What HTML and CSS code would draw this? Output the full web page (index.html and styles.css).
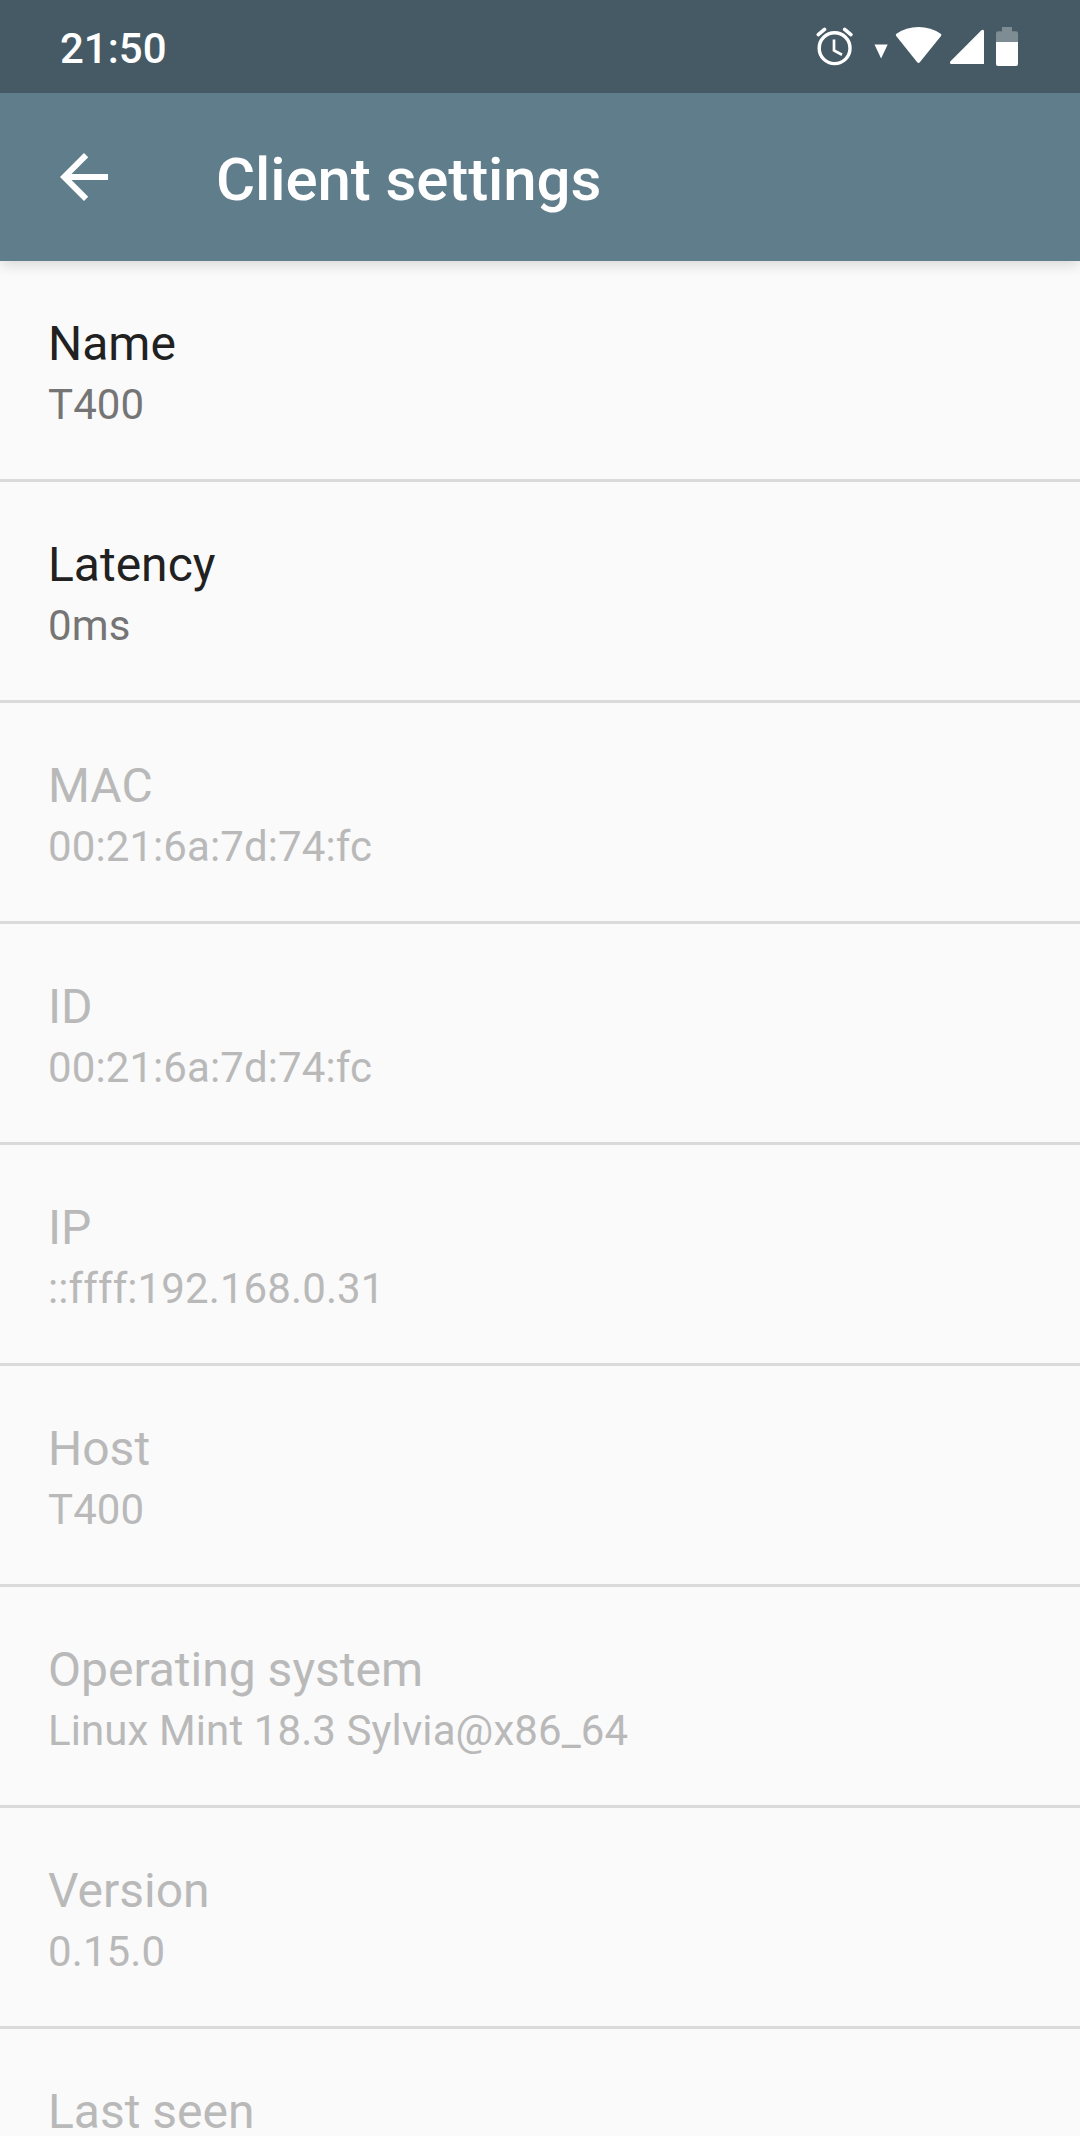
FILE: index.html
```html
<!DOCTYPE html>
<html lang="en">
<head>
<meta charset="utf-8">
<title>Client settings</title>
<link rel="stylesheet" href="styles.css">
</head>
<body>
<div class="screen">
  <div class="status-bar">
    <span class="clock">21:50</span>
    <div class="status-icons">
      <svg class="alarm" width="38" height="40" viewBox="816 27 38 40">
        <circle cx="834.6" cy="48.2" r="15.4" fill="none" stroke="#fff" stroke-width="3.4"/>
        <path d="M834 39.5v11l8 4.2" fill="none" stroke="#fff" stroke-width="2.7"/>
        <path d="M818.3 34.6l6.2-5.2M844.7 29.4l6.2 5.2" fill="none" stroke="#fff" stroke-width="3.6" stroke-linecap="round"/>
      </svg>
      <svg class="triangle" width="14" height="40" viewBox="874.5 27 14 40">
        <path d="M875 44.5h13.2L881.6 58.5z" fill="#fff"/>
      </svg>
      <svg class="wifi" width="47" height="40" viewBox="895 27 47 40">
        <path d="M896.5 33.8Q906 27 918.5 27T940.7 33.8Q942 34.8 941 36.1L920 62Q918.5 63.8 917 62L896.2 36.1Q895.2 34.8 896.5 33.8z" fill="#fff"/>
      </svg>
      <svg class="signal" width="34" height="40" viewBox="950 27 34 40">
        <path d="M950.5 61.2L981.2 30.5Q982 29.8 983 29.8Q984 30 984 31.2V64H951.3Q950 64 950 62.5Q950 61.7 950.5 61.2z" fill="#fff"/>
      </svg>
      <svg class="battery" width="22" height="40" viewBox="996 27 22 40">
        <path d="M1002 27h10v4.200h4q2 0 2 2V42h-22v-8.800q0-2 2-2h4z" fill="#7e8c93"/>
        <path d="M996 42h22v22q0 2-2 2h-18q-2 0-2-2z" fill="#fff"/>
      </svg>
    </div>
  </div>
  <header class="app-bar">
    <svg class="back" width="72" height="72" viewBox="0 0 24 24"><path fill="#fff" d="M20 11H7.830l5.590-5.590L12 4l-8 8 8 8 1.410-1.410L7.830 13H20v-2z"/></svg>
    <h1 class="title">Client settings</h1>
  </header>
  <main class="list">
    <div class="item"><div class="name">Name</div><div class="value">T400</div></div>
    <div class="item"><div class="name">Latency</div><div class="value">0ms</div></div>
    <div class="item disabled"><div class="name">MAC</div><div class="value">00:21:6a:7d:74:fc</div></div>
    <div class="item disabled"><div class="name">ID</div><div class="value">00:21:6a:7d:74:fc</div></div>
    <div class="item disabled"><div class="name">IP</div><div class="value">::ffff:192.168.0.31</div></div>
    <div class="item disabled"><div class="name">Host</div><div class="value">T400</div></div>
    <div class="item disabled"><div class="name">Operating system</div><div class="value">Linux Mint 18.3 Sylvia@x86_64</div></div>
    <div class="item disabled"><div class="name">Version</div><div class="value">0.15.0</div></div>
    <div class="item disabled"><div class="name">Last seen</div></div>
  </main>
</div>
</body>
</html>
```
FILE: styles.css
```css
* { box-sizing: border-box; }
body { margin: 0; background: #fafafa; font-family: Roboto, sans-serif; }
svg { display: block; flex: none; }
.screen { width: 1080px; height: 2136px; overflow: hidden; display: flex; flex-direction: column; }
.status-bar {
  position: relative; z-index: 1;
  flex: none; height: 93px; padding: 0 62px 0 60px; background: #455a64; color: #fff;
  display: flex; justify-content: space-between; align-items: flex-start;
}
.clock { font-size: 42px; font-weight: 500; line-height: 50px; padding-top: 24px; }
.status-icons { display: flex; padding-top: 27px; }
.triangle { margin-left: 20px; }
.wifi { margin-left: 7px; }
.signal { margin-left: 8px; }
.battery { margin-left: 12px; }
.app-bar {
  flex: none; height: 168px; padding-left: 48px; background: #607d8b; color: #fff;
  display: flex; align-items: center; gap: 96px;
  box-shadow: 0 2px 14px rgba(0, 0, 0, .12), 0 6px 14px rgba(0, 0, 0, .04);
}
.title { margin: 0; padding-top: 5px; font-size: 60px; font-weight: 500; line-height: 70px; letter-spacing: -.1px; }
.list { flex: none; }
.item { height: 221px; padding: 55px 48px 0; border-bottom: 3px solid #dadada; }
.name { font-size: 48px; line-height: 56px; color: #212121; }
.value { margin-top: 8px; font-size: 42px; line-height: 50px; letter-spacing: .1px; color: #757575; }
.disabled .name, .disabled .value { color: #b9b9b9; }
```
